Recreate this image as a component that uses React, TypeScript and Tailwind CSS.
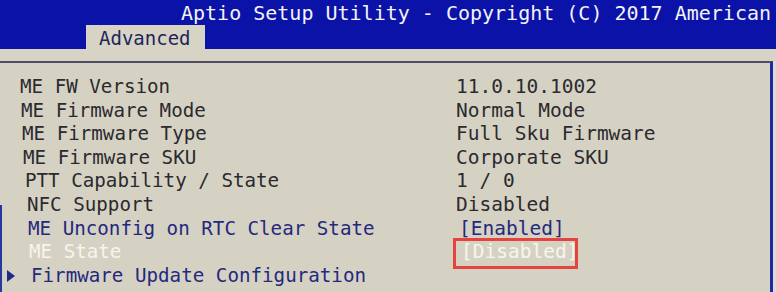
import React from "react";

type Row = {
  label: string;
  value: string;
  labelCls: string;
  valueCls: string;
  arrow?: boolean;
  boxed?: boolean;
};

const rows: Row[] = [
  { label: "ME FW Version", value: "11.0.10.1002", labelCls: "pl-[20px] text-[#2b2a2e]", valueCls: "pl-[456px] text-[#2b2a2e]" },
  { label: "ME Firmware Mode", value: "Normal Mode", labelCls: "pl-[21px] text-[#2b2a2e]", valueCls: "pl-[456px] text-[#2b2a2e]" },
  { label: "ME Firmware Type", value: "Full Sku Firmware", labelCls: "pl-[22px] text-[#2b2a2e]", valueCls: "pl-[456px] text-[#2b2a2e]" },
  { label: "ME Firmware SKU", value: "Corporate SKU", labelCls: "pl-[23px] text-[#2b2a2e]", valueCls: "pl-[456px] text-[#2b2a2e]" },
  { label: "PTT Capability / State", value: "1 / 0", labelCls: "pl-[25px] text-[#2b2a2e]", valueCls: "pl-[456px] text-[#2b2a2e]" },
  { label: "NFC Support", value: "Disabled", labelCls: "pl-[27px] text-[#2b2a2e]", valueCls: "pl-[456px] text-[#2b2a2e]" },
  { label: "ME Unconfig on RTC Clear State", value: "[Enabled]", labelCls: "pl-[28px] text-[#24297e]", valueCls: "pl-[459px] text-[#24297e]" },
  { label: "ME State", value: "[Disabled]", labelCls: "pl-[29px] text-[#f7f5ec]", valueCls: "pl-[461px] text-[#f7f5ec]", boxed: true },
  { label: "Firmware Update Configuration", value: "", labelCls: "pl-[31px] text-[#24297e]", valueCls: "pl-[456px]", arrow: true },
];

export default function App() {
  return (
    <div
      className="relative w-[776px] h-[292px] overflow-hidden bg-[#d6d3c5]"
      style={{ fontFamily: '"DejaVu Sans Mono", "Liberation Mono", monospace' }}
    >
      {/* header */}
      <div className="h-[49px] bg-[#0a12a8] flex flex-col">
        <div className="h-[26px] flex items-center pl-[181px] text-[20px] leading-none text-[#f3f3f6] whitespace-nowrap">
          Aptio Setup Utility - Copyright (C) 2017 American
        </div>
        <div className="h-[23px] flex">
          <div className="ml-[86px] w-[119px] h-[24px] -mt-[1px] bg-[#d7d4c5] flex items-center pt-[3px] pl-[13px] text-[19px] leading-none text-[#23245a]">
            Advanced
          </div>
        </div>
      </div>
      {/* strip under tab */}
      <div className="h-[12px] bg-[#d7d4c6]" />
      {/* content frame */}
      <div className="flex">
        <div className="w-[773px] h-[231px] border-t-2 border-t-[#4d4c64] border-r-[3px] border-r-[#1d2aa4] pt-[12px] bg-[#d5d2c4]">
          {rows.map((r, i) => (
            <div key={i} className="relative h-[23.6px] leading-[23.6px] whitespace-nowrap">
              <div className={"absolute left-0 top-0 text-[19.2px] " + r.labelCls}>{r.label}</div>
              {r.arrow && (
                <svg className="absolute left-[7px] top-[6px]" width="8" height="12" viewBox="0 0 8 12">
                  <path d="M0 0 L8 6 L0 12 Z" fill="#1f2a86" />
                </svg>
              )}
              {r.value && <div className={"absolute left-0 top-0 text-[19.5px] " + r.valueCls}>{r.value}</div>}
              {r.boxed && (
                <div className="absolute left-[453px] top-[-2px] w-[125px] h-[31px] border-[3px] border-[#e3443d]" />
              )}
            </div>
          ))}
        </div>
        <div className="flex-1 bg-[#dcdbd6]" />
      </div>
      {/* left edge blue line from photo */}
      <div className="absolute left-0 top-[205px] w-[2px] h-[87px] bg-[#2a36a0]" />
    </div>
  );
}
